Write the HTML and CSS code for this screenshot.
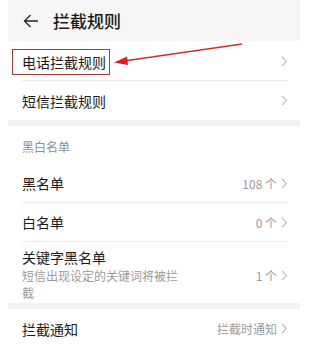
FILE: index.html
```html
<!DOCTYPE html>
<html lang="zh">
<head>
<meta charset="utf-8">
<link rel="stylesheet" href="styles.css">
</head>
<body>
<div class="screen">
  <header class="topbar">
    <svg class="back" width="16" height="14" viewBox="0 0 16 14"><path d="M15 7H1.5M7.5 1L1.5 7l6 6" fill="none" stroke="#222" stroke-width="1.3"/></svg>
    <span class="title">拦截规则</span>
  </header>

  <div class="group">
    <div class="row first">
      <span class="label boxed">电话拦截规则</span>
      <span class="right"><svg class="chev" width="7" height="11" viewBox="0 0 7 11"><path d="M1 1l4.5 4.5L1 10" fill="none" stroke="#bdbdbd" stroke-width="1.1"/></svg></span>
    </div>
    <div class="row">
      <span class="label">短信拦截规则</span>
      <span class="right"><svg class="chev" width="7" height="11" viewBox="0 0 7 11"><path d="M1 1l4.5 4.5L1 10" fill="none" stroke="#bdbdbd" stroke-width="1.1"/></svg></span>
    </div>
  </div>

  <div class="gap"></div>

  <div class="group">
    <div class="section">黑白名单</div>
    <div class="row">
      <span class="label">黑名单</span>
      <span class="right"><span class="value">108 个</span><svg class="chev" width="7" height="11" viewBox="0 0 7 11"><path d="M1 1l4.5 4.5L1 10" fill="none" stroke="#bdbdbd" stroke-width="1.1"/></svg></span>
    </div>
    <div class="row">
      <span class="label">白名单</span>
      <span class="right"><span class="value">0 个</span><svg class="chev" width="7" height="11" viewBox="0 0 7 11"><path d="M1 1l4.5 4.5L1 10" fill="none" stroke="#bdbdbd" stroke-width="1.1"/></svg></span>
    </div>
    <div class="row tall">
      <div class="stack">
        <span class="label">关键字黑名单</span>
        <span class="sub">短信出现设定的关键词将被拦截</span>
      </div>
      <span class="right"><span class="value">1 个</span><svg class="chev" width="7" height="11" viewBox="0 0 7 11"><path d="M1 1l4.5 4.5L1 10" fill="none" stroke="#bdbdbd" stroke-width="1.1"/></svg></span>
    </div>
  </div>

  <div class="gap"></div>

  <div class="group">
    <div class="row">
      <span class="label">拦截通知</span>
      <span class="right"><span class="value">拦截时通知</span><svg class="chev" width="7" height="11" viewBox="0 0 7 11"><path d="M1 1l4.5 4.5L1 10" fill="none" stroke="#bdbdbd" stroke-width="1.1"/></svg></span>
    </div>
  </div>

  <svg class="annot" width="292" height="80" viewBox="0 0 292 80">
    <line x1="234" y1="44" x2="116" y2="61" stroke="#d42a2a" stroke-width="1.3"/>
    <polygon points="106,62.5 119,56.5 120,65" fill="#e01e1e"/>
  </svg>
</div>
</body>
</html>
```

FILE: styles.css
```css
* { box-sizing: border-box; }
html, body { margin: 0; padding: 0; background: #fff; }
body {
  font-family: "Noto Sans CJK SC", "Noto Sans", sans-serif;
  color: #1b1b1b;
}
.screen {
  position: relative;
  width: 292px;
  margin-left: 8px;
  background: #fff;
  overflow: hidden;
  height: 348px;
}
.topbar {
  height: 41px;
  background: #f6f6f6;
  display: flex;
  align-items: center;
  padding-left: 15px;
}
.back { display: block; }
.title {
  margin-left: 14px;
  font-size: 17px;
  font-weight: 500;
  color: #1a1a1a;
}
.group { padding: 0 12px 0 14px; }
.row {
  display: flex;
  align-items: center;
  justify-content: space-between;
  height: 39px;
  border-bottom: 1px solid #ececec;
}
.row:last-child { border-bottom: none; }
.row.first { height: 40px; padding-top: 2px; }
.row.tall { height: 61px; padding-top: 2px; }
.row.tall .right { margin-top: 4px; }
.label { font-size: 14px; line-height: 20px; color: #1b1b1b; }
.boxed {
  margin-left: -10px;
  padding: 2px 3px 2px 9px;
  border: 1.5px solid #a83a3a;
}
.right { display: flex; align-items: center; }
.value { font-size: 12px; color: #9a9a9a; margin-right: 4px; }
.chev { display: block; }
.stack { display: flex; flex-direction: column; width: 160px; }
.sub { font-size: 12px; color: #9a9a9a; line-height: 17px; }
.gap { height: 6px; background: #f2f2f2; }
.section {
  height: 38px;
  display: flex;
  align-items: center;
  font-size: 12px;
  color: #8e8e8e;
  padding-top: 2px;
}
.annot { position: absolute; top: 0; left: 0; pointer-events: none; }
```
